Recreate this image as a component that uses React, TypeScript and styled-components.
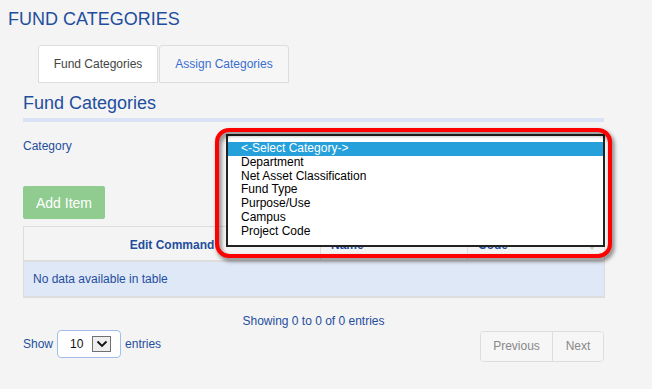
import styled, { createGlobalStyle } from 'styled-components';

const BLUE = '#1f4e9e';

const categories = [
  '<-Select Category->',
  'Department',
  'Net Asset Classification',
  'Fund Type',
  'Purpose/Use',
  'Campus',
  'Project Code',
];

export default function App() {
  return (
    <>
      <GlobalStyle />
      <Page>
        <Title>FUND CATEGORIES</Title>
        <Tabs>
          <Tab $active $w={120}>Fund Categories</Tab>
          <Tab $w={130}>Assign Categories</Tab>
        </Tabs>

        <Content>
          <Heading>Fund Categories</Heading>
          <Rule />
          <Label>Category</Label>
          <AddButton>Add Item</AddButton>

          <Table>
            <colgroup>
              <col style={{ width: 297 }} />
              <col style={{ width: 147 }} />
              <col style={{ width: 137 }} />
            </colgroup>
            <thead>
              <tr>
                <HeadCell $center>Edit Command</HeadCell>
                <HeadCell>Name</HeadCell>
                <HeadCell $sortable>Code</HeadCell>
              </tr>
            </thead>
            <tbody>
              <tr>
                <EmptyCell colSpan={3}>No data available in table</EmptyCell>
              </tr>
            </tbody>
          </Table>

          <Info>Showing 0 to 0 of 0 entries</Info>

          <Footer>
            <Length>
              <span>Show</span>
              <LengthSelect>
                <span>10</span>
                <ArrowBox>
                  <svg width="12" height="8" viewBox="0 0 12 8">
                    <polyline points="1.5,1.5 6,6 10.5,1.5" fill="none" stroke="#111" strokeWidth="1.8" />
                  </svg>
                </ArrowBox>
              </LengthSelect>
              <span>entries</span>
            </Length>
            <Pager>
              <PageButton $w={71}>Previous</PageButton>
              <PageButton $w={50}>Next</PageButton>
            </Pager>
          </Footer>
        </Content>

        <ListBox>
          {categories.map((c, i) => (
            <Option key={c} $selected={i === 0}>{c}</Option>
          ))}
        </ListBox>
        <Highlight />
      </Page>
    </>
  );
}

const GlobalStyle = createGlobalStyle`
  body {
    margin: 0;
    background: #f4f4f4;
    font-family: "Liberation Sans", Arial, sans-serif;
  }
`;

const Page = styled.div`
  position: relative;
  width: 652px;
  height: 389px;
  padding-top: 9px;
  box-sizing: border-box;
  overflow: hidden;
`;

const Title = styled.h1`
  margin: 0 0 0 8px;
  font-size: 18px;
  line-height: 20px;
  font-weight: normal;
  color: ${BLUE};
`;

const Tabs = styled.div`
  display: flex;
  gap: 1px;
  margin: 16px 0 0 38px;
`;

const Tab = styled.div<{ $active?: boolean; $w: number }>`
  display: flex;
  align-items: center;
  justify-content: center;
  width: ${(p) => p.$w}px;
  height: 38px;
  box-sizing: border-box;
  border: 1px solid #dddddd;
  border-radius: 3px 3px 0 0;
  background: ${(p) => (p.$active ? '#ffffff' : '#f6f6f6')};
  color: ${(p) => (p.$active ? '#444444' : '#3a6fcf')};
  font-size: 12px;
  white-space: nowrap;
`;

const Content = styled.div`
  width: 581px;
  margin-left: 23px;
`;

const Heading = styled.h2`
  margin: 10px 0 0;
  font-size: 18px;
  line-height: 20px;
  font-weight: normal;
  color: ${BLUE};
`;

const Rule = styled.div`
  height: 4px;
  margin-top: 5px;
  background: #d9e3f5;
`;

const Label = styled.div`
  margin-top: 17px;
  font-size: 12px;
  line-height: 14px;
  color: ${BLUE};
`;

const AddButton = styled.button`
  display: block;
  width: 82px;
  height: 33px;
  margin-top: 33px;
  padding: 0;
  border: none;
  border-radius: 2px;
  background: #90cc90;
  color: #ffffff;
  font-family: inherit;
  font-size: 14px;
`;

const Table = styled.table`
  width: 581px;
  margin-top: 7px;
  border-collapse: collapse;
  table-layout: fixed;
  font-size: 12px;
`;

const HeadCell = styled.th<{ $center?: boolean; $sortable?: boolean }>`
  position: relative;
  height: 34px;
  padding: 4px 10px 0;
  box-sizing: border-box;
  border: 1px solid #dddddd;
  border-bottom: 2px solid #dddddd;
  background: #f4f4f4;
  color: ${BLUE};
  font-weight: bold;
  text-align: ${(p) => (p.$center ? 'center' : 'left')};

  &::after {
    content: '';
    display: ${(p) => (p.$sortable ? 'block' : 'none')};
    position: absolute;
    right: 8px;
    bottom: 10px;
    border-left: 4px solid transparent;
    border-right: 4px solid transparent;
    border-top: 5px solid #cfcfcf;
  }
`;

const EmptyCell = styled.td`
  height: 34px;
  padding: 0 9px;
  border: 1px solid #dddddd;
  border-bottom: 2px solid #dddddd;
  background: #dfe8f6;
  color: ${BLUE};
`;

const Info = styled.div`
  margin-top: 15px;
  font-size: 12px;
  line-height: 16px;
  text-align: center;
  color: ${BLUE};
`;

const Footer = styled.div`
  display: flex;
  justify-content: space-between;
  align-items: flex-start;
  margin-top: 1px;
`;

const Length = styled.div`
  display: flex;
  align-items: center;
  gap: 4px;
  font-size: 12px;
  color: ${BLUE};
`;

const LengthSelect = styled.div`
  display: flex;
  align-items: center;
  width: 64px;
  height: 28px;
  box-sizing: border-box;
  padding: 0 9px 0 12px;
  border: 1px solid #a3bee8;
  border-radius: 4px;
  background: #ffffff;
  color: #111111;
  font-size: 12px;
`;

const ArrowBox = styled.span`
  display: flex;
  align-items: center;
  justify-content: center;
  width: 19px;
  height: 16px;
  margin-left: auto;
  box-sizing: border-box;
  border: 1px solid #707070;
  background: #eeeeee;
`;

const Pager = styled.div`
  display: flex;
  margin-top: 1px;
  border: 1px solid #dddddd;
  border-radius: 4px;
  overflow: hidden;
`;

const PageButton = styled.div<{ $w: number }>`
  display: flex;
  align-items: center;
  justify-content: center;
  width: ${(p) => p.$w}px;
  height: 29px;
  font-size: 12px;
  color: #888888;
  background: #f6f6f6;

  & + & {
    border-left: 1px solid #dddddd;
  }
`;

const ListBox = styled.div`
  position: absolute;
  left: 226px;
  top: 134px;
  width: 379px;
  height: 113px;
  box-sizing: border-box;
  padding-top: 6px;
  border: 2px solid #222222;
  background: #ffffff;
  font-size: 12px;
`;

const Option = styled.div<{ $selected?: boolean }>`
  height: 13.8px;
  line-height: 13.8px;
  padding-left: 13px;
  white-space: nowrap;
  background: ${(p) => (p.$selected ? '#26a0da' : 'transparent')};
  color: ${(p) => (p.$selected ? '#ffffff' : '#000000')};
`;

const Highlight = styled.div`
  position: absolute;
  left: 215px;
  top: 128px;
  width: 397px;
  height: 130px;
  box-sizing: border-box;
  border: 4px solid #ff0000;
  border-radius: 14px;
  filter: drop-shadow(2px 3px 2px rgba(0, 0, 0, 0.55));
`;
